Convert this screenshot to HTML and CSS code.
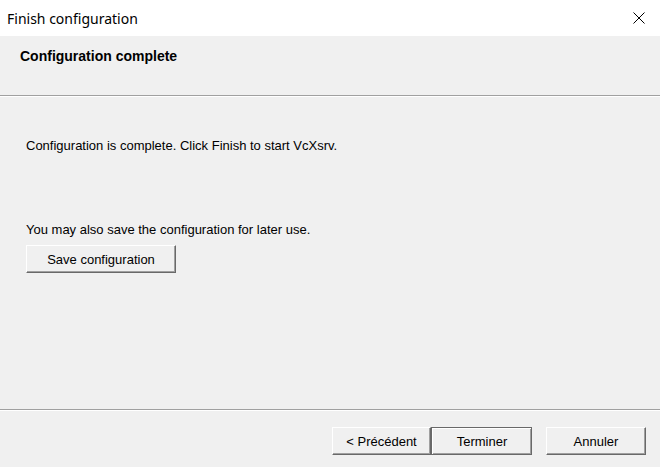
FILE: index.html
```html
<!DOCTYPE html>
<html>
<head>
<meta charset="utf-8">
<link rel="stylesheet" href="styles.css">
</head>
<body>
<div class="window">
  <div class="titlebar">
    <span class="title">Finish configuration</span>
    <span class="close">
      <svg width="12" height="12" viewBox="0 0 12 12"><path d="M0.5 0.5 L11.5 11.5 M11.5 0.5 L0.5 11.5" stroke="#000" stroke-width="1" fill="none"/></svg>
    </span>
  </div>
  <div class="header">
    <div class="heading">Configuration complete</div>
  </div>
  <div class="content">
    <p class="msg first">Configuration is complete. Click Finish to start VcXsrv.</p>
    <p class="msg second">You may also save the configuration for later use.</p>
    <button class="btn save">Save configuration</button>
  </div>
  <div class="footer">
    <button class="btn nav">&lt; Précédent</button>
    <button class="btn nav default">Terminer</button>
    <button class="btn nav cancel">Annuler</button>
  </div>
</div>
</body>
</html>
```
FILE: styles.css
```css
html, body {
  margin: 0;
  padding: 0;
  background: #f0f0f0;
}
.window {
  width: 660px;
  height: 467px;
  display: flex;
  flex-direction: column;
  background: #f0f0f0;
  font-family: "Liberation Sans", Arial, sans-serif;
  font-size: 13px;
  color: #000;
}
.titlebar {
  height: 36px;
  background: #fff;
  display: flex;
  align-items: center;
  justify-content: space-between;
  padding: 0 15px 0 7px;
  box-sizing: border-box;
}
.title {
  font-family: "Noto Sans", "Open Sans", sans-serif;
  font-size: 14px;
  color: #000;
}
.close {
  display: flex;
  width: 12px;
  height: 12px;
}
.header {
  height: 60px;
  box-sizing: border-box;
  border-bottom: 1px solid #a0a0a0;
  padding: 12px 0 0 20px;
}
.heading {
  font-weight: bold;
  font-size: 14px;
}
.content {
  flex: 1;
  padding: 0 0 0 26px;
  box-sizing: border-box;
  border-bottom: 1px solid #a0a0a0;
  border-top: 1px solid #fff;
}
.msg {
  margin: 0;
  line-height: 15px;
}
.msg.first {
  margin-top: 41px;
}
.msg.second {
  margin-top: 69px;
}
.btn {
  font-family: "Liberation Sans", Arial, sans-serif;
  font-size: 13px;
  color: #000;
  background: #f0f0f0;
  border: 1px solid;
  border-color: #fff #696969 #696969 #fff;
  box-shadow: inset -1px -1px 0 #a0a0a0;
  padding: 0;
  margin: 0;
  box-sizing: border-box;
}
.save {
  display: block;
  margin-top: 8px;
  width: 150px;
  height: 28px;
}
.footer {
  height: 57px;
  box-sizing: border-box;
  border-top: 1px solid #fff;
  display: flex;
  align-items: flex-start;
  padding: 16px 0 0 332px;
}
.nav {
  width: 99px;
  height: 28px;
}
.default {
  width: 101px;
  outline: 1px solid #696969;
  outline-offset: -1px;
  border-width: 2px 1px 1px 2px;
}
.cancel {
  width: 100px;
  margin-left: 14px;
}
```
